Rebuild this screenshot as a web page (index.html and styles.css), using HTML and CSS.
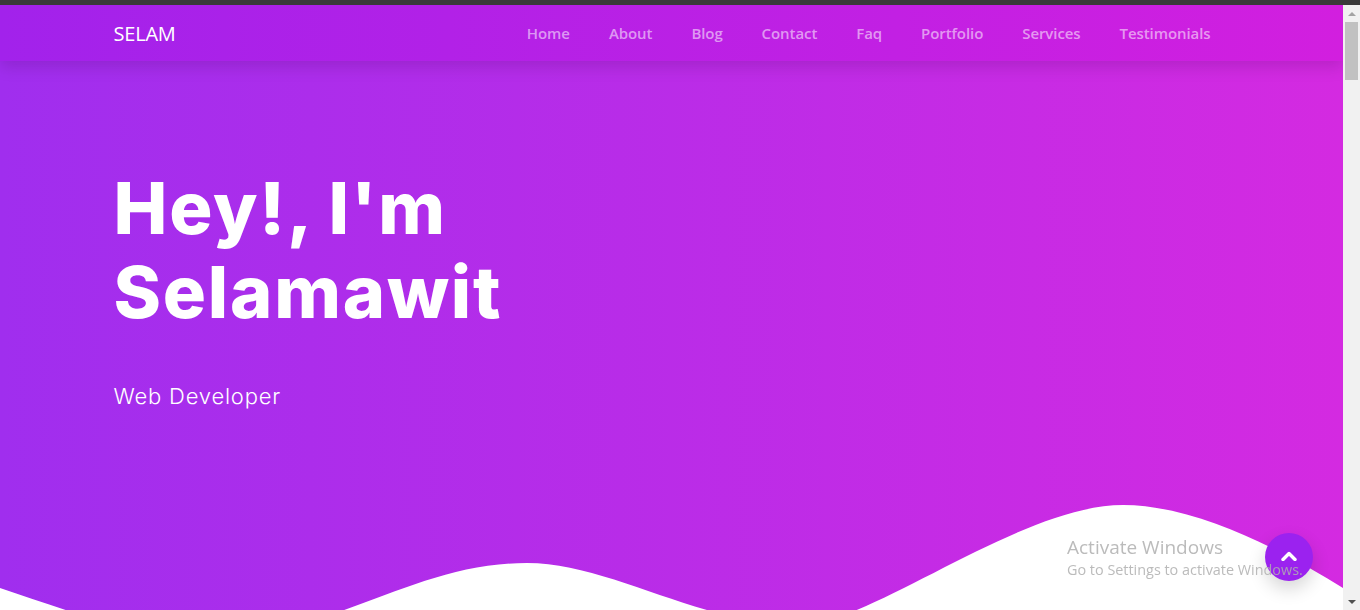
FILE: index.html
```html
<!DOCTYPE html>
<html lang="en">
<head>
<meta charset="utf-8">
<title>Selam</title>
<link rel="stylesheet" href="styles.css">
</head>
<body>
<div class="chrome"></div>
<div class="viewport">
  <div class="page">
    <header class="navbar">
      <div class="container nav-inner">
        <a class="brand" href="#">SELAM</a>
        <ul class="nav-links">
          <li><a href="#">Home</a></li>
          <li><a href="#">About</a></li>
          <li><a href="#">Blog</a></li>
          <li><a href="#">Contact</a></li>
          <li><a href="#">Faq</a></li>
          <li><a href="#">Portfolio</a></li>
          <li><a href="#">Services</a></li>
          <li><a href="#">Testimonials</a></li>
        </ul>
      </div>
    </header>
    <section class="hero">
      <div class="container hero-text">
        <h1>Hey!, I'm<br>Selamawit</h1>
        <p class="role">Web Developer</p>
      </div>
      <svg class="wave" viewBox="0 0 1343 110" preserveAspectRatio="none" aria-hidden="true">
        <path fill="#ffffff" d="M0,88 C60,108 140,138 200,138 C335,138 410,63 527,63 C610,63 700,125 800,125 C870,125 1020,5 1123,5 C1200,5 1290,55 1343,88 L1343,140 L0,140 Z"/>
      </svg>
    </section>
    <section class="rest"></section>
  </div>
  <div class="scrollbar" aria-hidden="true">
    <div class="sb-btn sb-up"><span class="tri tri-up"></span></div>
    <div class="sb-track"><div class="sb-thumb"></div></div>
    <div class="sb-btn sb-down"><span class="tri tri-down"></span></div>
  </div>
</div>
<a class="to-top" href="#" aria-label="Back to top">
  <svg width="16" height="10" viewBox="0 0 16 10"><path d="M2 8.5 L8 2.5 L14 8.5" fill="none" stroke="#ffffff" stroke-width="3.4" stroke-linecap="round" stroke-linejoin="round"/></svg>
</a>
<div class="watermark">
  <div class="wm-title">Activate Windows</div>
  <div class="wm-sub">Go to Settings to activate Windows.</div>
</div>
</body>
</html>
```
FILE: styles.css
```css
* { box-sizing: border-box; }

html, body {
  margin: 0;
  height: 100%;
}

body {
  display: flex;
  flex-direction: column;
  overflow: hidden;
  font-family: "Open Sans", "Noto Sans", sans-serif;
  background: #ffffff;
}

.chrome {
  height: 5px;
  flex: 0 0 5px;
  background: #3a3a3a;
}

.viewport {
  flex: 1 1 auto;
  min-height: 0;
  display: flex;
}

.page {
  flex: 1 1 auto;
  min-width: 0;
  overflow-y: scroll;
  overflow-x: hidden;
  scrollbar-width: none;
}

.page::-webkit-scrollbar {
  display: none;
}

/* Drawn scrollbar */
.scrollbar {
  flex: 0 0 17px;
  width: 17px;
  display: flex;
  flex-direction: column;
  background: #f1f1f1;
}

.sb-btn {
  height: 17px;
  flex: 0 0 17px;
  display: flex;
  align-items: center;
  justify-content: center;
}

.tri {
  width: 0;
  height: 0;
  border-left: 4px solid transparent;
  border-right: 4px solid transparent;
}

.tri-up {
  border-bottom: 4px solid #a3a3a3;
}

.tri-down {
  border-top: 4px solid #505050;
}

.sb-track {
  flex: 1 1 auto;
  padding: 0 2px;
}

.sb-thumb {
  height: 58px;
  background: #c1c1c1;
}

.container {
  width: 1140px;
  margin: 0 auto;
  padding: 0 12px;
}

/* Navbar */
.navbar {
  position: relative;
  z-index: 2;
  height: 56px;
  background: linear-gradient(90deg, #a222eb 0%, #d21fdf 100%);
  box-shadow: 0 6px 14px rgba(60, 0, 80, 0.18);
}

.nav-inner {
  height: 100%;
  display: flex;
  align-items: center;
  justify-content: space-between;
}

.brand {
  color: #ffffff;
  text-decoration: none;
  font-size: 20px;
  font-weight: 400;
  letter-spacing: -0.2px;
  margin-top: 1px;
}

.nav-links {
  list-style: none;
  margin: 0;
  padding: 0;
  display: flex;
}

.nav-links a {
  display: block;
  padding: 0 19.5px;
  color: rgba(255, 255, 255, 0.55);
  text-decoration: none;
  font-size: 15px;
  font-weight: 600;
  letter-spacing: -0.08px;
}

.nav-links li:last-child a {
  padding-right: 19px;
}

/* Hero */
.hero {
  position: relative;
  height: 549px;
  overflow: hidden;
  background: linear-gradient(90deg, #a02eee 0%, #d42ae1 100%);
}

.hero-text {
  padding-top: 105px;
  color: #ffffff;
}

.hero-text h1 {
  margin: 0;
  font-family: "Inter", "Open Sans", sans-serif;
  font-weight: 800;
  font-size: 72px;
  line-height: 84px;
  letter-spacing: 1.8px;
}

.role {
  margin: 46px 0 0;
  font-family: "Inter", "Open Sans", sans-serif;
  font-weight: 300;
  font-size: 22px;
  line-height: 33px;
  letter-spacing: 0.8px;
}

.wave {
  position: absolute;
  left: 0;
  bottom: 0;
  width: 100%;
  height: 110px;
  display: block;
}

.rest {
  height: 5350px;
  background: #ffffff;
}

/* Back to top */
.to-top {
  position: fixed;
  right: 47px;
  bottom: 29px;
  width: 48px;
  height: 48px;
  border-radius: 50%;
  background: #9b22ef;
  display: flex;
  align-items: center;
  justify-content: center;
  box-shadow: 0 8px 18px rgba(0, 0, 0, 0.16);
  z-index: 5;
}

.to-top svg {
  display: block;
  margin-top: -2px;
}

/* OS watermark */
.watermark {
  position: fixed;
  left: 1067px;
  top: 534px;
  z-index: 10;
  color: rgba(175, 175, 175, 0.85);
  font-family: "Open Sans", "Noto Sans", sans-serif;
  pointer-events: none;
}

.wm-title {
  font-size: 19px;
  line-height: 26px;
}

.wm-sub {
  font-size: 14.4px;
  line-height: 20px;
}
```
